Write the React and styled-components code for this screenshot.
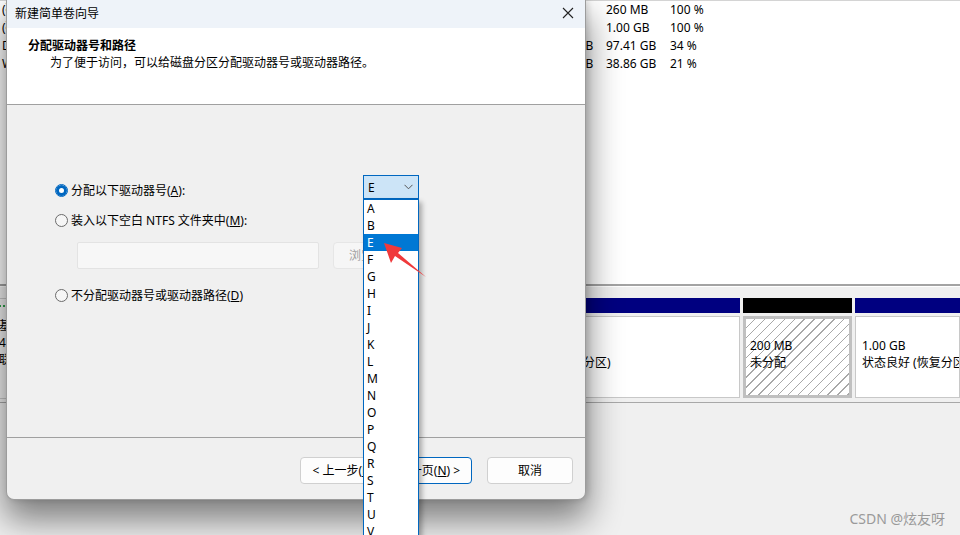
import React from "react";
import styled, { createGlobalStyle } from "styled-components";

const GlobalStyle = createGlobalStyle`
  html, body {
    margin: 0;
    padding: 0;
  }
  body {
    background: #f0f0f0;
    font-family: "Noto Sans", "Noto Sans CJK SC", sans-serif;
  }
`;

const Screen = styled.div`
  position: relative;
  width: 960px;
  height: 535px;
  overflow: hidden;
  background: #f0f0f0;
  font-size: 12px;
  color: #000;
`;

/* ---------- disk management window behind the wizard ---------- */

const Backdrop = styled.div`
  display: flex;
  flex-direction: column;
  height: 100%;
`;

const VolumeList = styled.div`
  height: 284px;
  background: #fff;
  border-top: 1px solid #d4d4d4;
  box-sizing: border-box;
`;

const VolumeRow = styled.div`
  display: grid;
  grid-template-columns: 536px 70px 64px 1fr;
  height: 18px;
  line-height: 18px;
  white-space: nowrap;
  & > span:first-child {
    padding-left: 2px;
  }
`;

const Splitter = styled.div`
  height: 12px;
  border-top: 2px solid #a3a3a3;
  box-shadow: inset 0 1px 0 #fff;
  background: #f0f0f0;
`;

const DiskRow = styled.div`
  display: flex;
  gap: 3px;
  height: 101px;
  margin-left: -8px;
`;

const DiskLabel = styled.div`
  width: 148px;
  flex-shrink: 0;
  background: #f0f0f0;
  border: 1px solid #c8c8c8;
  box-sizing: border-box;
  padding: 4px 0 0 6px;
  line-height: 17px;
  white-space: nowrap;
`;

const DiskIcon = styled.div`
  width: 14px;
  height: 6px;
  margin: 2px 0 4px;
  border-top: 2px dotted #2fa24a;
`;

const Partition = styled.div`
  display: flex;
  flex-direction: column;
  gap: 3px;
  flex: ${({ $grow }) => ($grow ? 1 : "none")};
  width: ${({ $width }) => ($width ? `${$width}px` : "auto")};
  min-width: 0;
`;

const PartitionBar = styled.div`
  height: 15px;
  background: ${({ $free }) => ($free ? "#000" : "#000080")};
`;

const PartitionBox = styled.div`
  height: 82px;
  box-sizing: border-box;
  line-height: 17px;
  white-space: nowrap;
  overflow: hidden;
  border: ${({ $free }) => ($free ? "3px solid #c0c0c0" : "1px solid #c8c8c8")};
  padding: ${({ $free }) => ($free ? "1px 4px" : "3px 6px")};
  background: ${({ $free }) =>
    $free
      ? "repeating-linear-gradient(135deg, #ffffff 0 6px, #a8a8a8 6px 7px)"
      : "#fff"};
`;

const BottomPane = styled.div`
  flex: 1;
  margin-top: 3px;
  border-top: 1px solid #a8a8a8;
  background: #f0f0f0;
`;

/* ---------- wizard dialog ---------- */

const Dialog = styled.div`
  position: absolute;
  left: 6px;
  top: 0;
  width: 580px;
  height: 500px;
  display: flex;
  flex-direction: column;
  box-sizing: border-box;
  border: 1px solid #9c9c9c;
  border-top: none;
  border-radius: 0 0 8px 8px;
  box-shadow: 0 18px 34px 2px rgba(0, 0, 0, 0.48), 2px 0 6px rgba(0, 0, 0, 0.14);
  background: #f0f0f0;
  font-family: "Noto Sans", "Noto Sans CJK SC", sans-serif;
`;

const TitleBar = styled.div`
  height: 28px;
  flex-shrink: 0;
  display: flex;
  align-items: center;
  justify-content: space-between;
  padding: 0 10px 2px 8px;
  box-sizing: border-box;
  background: #eef3f9;
  line-height: 17px;
`;

const CloseButton = styled.div`
  width: 14px;
  height: 14px;
  display: flex;
  align-items: center;
  justify-content: center;
  svg {
    display: block;
  }
`;

const Header = styled.div`
  height: 77px;
  flex-shrink: 0;
  box-sizing: border-box;
  background: #fff;
  border-bottom: 1px solid #a0a0a0;
  padding: 9px 0 0 21px;
  line-height: 17px;
`;

const HeaderTitle = styled.div`
  font-weight: 700;
`;

const HeaderDesc = styled.div`
  padding-left: 22px;
`;

const Body = styled.div`
  flex: 1;
  padding: 70px 0 0 48px;
  display: flex;
  flex-direction: column;
`;

const OptionRow = styled.div`
  display: grid;
  grid-template-columns: 308px auto;
  align-items: end;
`;

const RadioLabel = styled.label`
  display: flex;
  align-items: center;
  gap: 3px;
  line-height: 17px;
  white-space: nowrap;
  margin-top: ${({ $top }) => $top || 0}px;
`;

const Radio = styled.span`
  width: 13px;
  height: 13px;
  border-radius: 50%;
  box-sizing: border-box;
  flex-shrink: 0;
  background: ${({ $checked }) => ($checked ? "#fff" : "#f6f6f6")};
  border: 1px solid ${({ $checked }) => ($checked ? "#0067c0" : "#6b6b6b")};
  box-shadow: ${({ $checked }) => ($checked ? "inset 0 0 0 3px #0067c0" : "none")};
`;

const ComboWrap = styled.div`
  position: relative;
  width: 56px;
`;

const Combo = styled.div`
  height: 24px;
  box-sizing: border-box;
  border: 1px solid #0067c0;
  background: #cce4f7;
  display: flex;
  align-items: center;
  justify-content: space-between;
  padding: 0 5px 0 4px;
`;

const DropList = styled.div`
  position: absolute;
  top: 24px;
  left: 0;
  width: 56px;
  z-index: 10;
  background: #fff;
  border-left: 1px solid #0067c0;
  border-right: 1px solid #0067c0;
  border-top: 1px solid #0067c0;
  box-sizing: border-box;
  box-shadow: 3px 3px 5px rgba(0, 0, 0, 0.3);
`;

const DropItem = styled.div`
  height: 17px;
  line-height: 17px;
  padding-left: 3px;
  background: ${({ $active }) => ($active ? "#0078d4" : "transparent")};
  color: ${({ $active }) => ($active ? "#fff" : "#000")};
`;

const PathRow = styled.div`
  display: flex;
  gap: 14px;
  margin: 13px 0 0 22px;
`;

const PathInput = styled.div`
  width: 242px;
  height: 27px;
  box-sizing: border-box;
  border: 1px solid #e3e3e3;
  background: #f7f7f7;
  border-radius: 2px;
`;

const BrowseButton = styled.div`
  width: 76px;
  height: 27px;
  box-sizing: border-box;
  border: 1px solid #e6e6e6;
  border-radius: 4px;
  background: #f6f6f6;
  color: #a0a0a0;
  line-height: 25px;
  padding-left: 15px;
  white-space: nowrap;
`;

const Footer = styled.div`
  height: 62px;
  flex-shrink: 0;
  box-sizing: border-box;
  border-top: 1px solid #a0a0a0;
  display: flex;
  justify-content: flex-end;
  align-items: flex-start;
  padding: 19px 12px 0 0;
  border-radius: 0 0 8px 8px;
`;

const ButtonPair = styled.div`
  display: flex;
  margin-right: 15px;
`;

const Button = styled.div`
  width: 86px;
  height: 27px;
  box-sizing: border-box;
  border: 1px solid ${({ $primary }) => ($primary ? "#0067c0" : "#d0d0d0")};
  border-radius: 4px;
  background: #fdfdfd;
  display: flex;
  align-items: center;
  justify-content: center;
  white-space: nowrap;
  line-height: 17px;
`;

const Arrow = styled.svg`
  position: absolute;
  left: 0;
  top: 0;
  z-index: 20;
  pointer-events: none;
`;

const Watermark = styled.div`
  position: absolute;
  right: 15px;
  bottom: 7px;
  font-size: 14px;
  color: #9a9a9a;
  font-family: "Noto Sans", "Noto Sans CJK SC", sans-serif;
`;

const volumes = [
  ["(磁盘 0 磁盘分区 1)", "260 MB", "260 MB", "100 %"],
  ["(磁盘 0 磁盘分区 4)", "1.00 GB", "1.00 GB", "100 %"],
  ["Data (D:)", "286.49 GB", "97.41 GB", "34 %"],
  ["Win (C:)", "185.05 GB", "38.86 GB", "21 %"],
];

const letters = ["A", "B", "E", "F", "G", "H", "I", "J", "K", "L", "M", "N", "O", "P", "Q", "R", "S", "T", "U", "V", "W", "X", "Y", "Z"];

const App = () => {
  return (
    <Screen>
      <GlobalStyle />
      <Backdrop>
        <VolumeList>
          {volumes.map((v) => (
            <VolumeRow key={v[0]}>
              {v.map((cell, i) => (
                <span key={i}>{cell}</span>
              ))}
            </VolumeRow>
          ))}
        </VolumeList>
        <Splitter />
        <DiskRow>
          <DiskLabel>
            <DiskIcon />
            <div>基本</div>
            <div>476.92 GB</div>
            <div>联机</div>
          </DiskLabel>
          <Partition $width={80}>
            <PartitionBar />
            <PartitionBox>
              <div>&nbsp;</div>
              <div>260 MB</div>
              <div>状态良好</div>
            </PartitionBox>
          </Partition>
          <Partition $width={190}>
            <PartitionBar />
            <PartitionBox>
              <div>Win (C:)</div>
              <div>185.05 GB NTFS</div>
              <div>状态良好 (启动)</div>
            </PartitionBox>
          </Partition>
          <Partition $grow>
            <PartitionBar />
            <PartitionBox>
              <div>Data (D:)</div>
              <div>286.49 GB NTFS</div>
              <div>状态良好 (页面文件, 基本数据分区)</div>
            </PartitionBox>
          </Partition>
          <Partition $width={109}>
            <PartitionBar $free />
            <PartitionBox $free>
              <div>&nbsp;</div>
              <div>200 MB</div>
              <div>未分配</div>
            </PartitionBox>
          </Partition>
          <Partition $width={105}>
            <PartitionBar />
            <PartitionBox>
              <div>&nbsp;</div>
              <div>1.00 GB</div>
              <div>状态良好 (恢复分区)</div>
            </PartitionBox>
          </Partition>
        </DiskRow>
        <BottomPane />
      </Backdrop>

      <Dialog>
        <TitleBar>
          <span>新建简单卷向导</span>
          <CloseButton>
            <svg width="12" height="12" viewBox="0 0 12 12">
              <path d="M1 1 L11 11 M11 1 L1 11" stroke="#222" strokeWidth="1.1" fill="none" />
            </svg>
          </CloseButton>
        </TitleBar>
        <Header>
          <HeaderTitle>分配驱动器号和路径</HeaderTitle>
          <HeaderDesc>为了便于访问，可以给磁盘分区分配驱动器号或驱动器路径。</HeaderDesc>
        </Header>
        <Body>
          <OptionRow>
            <RadioLabel>
              <Radio $checked />
              <span>
                分配以下驱动器号(<u>A</u>):
              </span>
            </RadioLabel>
            <ComboWrap>
              <Combo>
                <span>E</span>
                <svg width="9" height="6" viewBox="0 0 9 6">
                  <path d="M0.5 0.8 L4.5 4.8 L8.5 0.8" stroke="#555" strokeWidth="1" fill="none" />
                </svg>
              </Combo>
              <DropList>
                {letters.map((l) => (
                  <DropItem key={l} $active={l === "E"}>
                    {l}
                  </DropItem>
                ))}
              </DropList>
            </ComboWrap>
          </OptionRow>
          <RadioLabel $top={13}>
            <Radio />
            <span>
              装入以下空白 NTFS 文件夹中(<u>M</u>):
            </span>
          </RadioLabel>
          <PathRow>
            <PathInput />
            <BrowseButton>浏览(R)...</BrowseButton>
          </PathRow>
          <RadioLabel $top={18}>
            <Radio />
            <span>
              不分配驱动器号或驱动器路径(<u>D</u>)
            </span>
          </RadioLabel>
        </Body>
        <Footer>
          <ButtonPair>
            <Button>
              &lt; 上一步(<u>B</u>)
            </Button>
            <Button $primary>
              下一页(<u>N</u>) &gt;
            </Button>
          </ButtonPair>
          <Button>取消</Button>
        </Footer>
      </Dialog>

      <Arrow width="960" height="535" viewBox="0 0 960 535">
        <polygon
          points="384,243 402,248 398,253 426,277 395,256 391,263"
          fill="#f0393b"
        />
      </Arrow>

      <Watermark>CSDN @炫友呀</Watermark>
    </Screen>
  );
};

export default App;
